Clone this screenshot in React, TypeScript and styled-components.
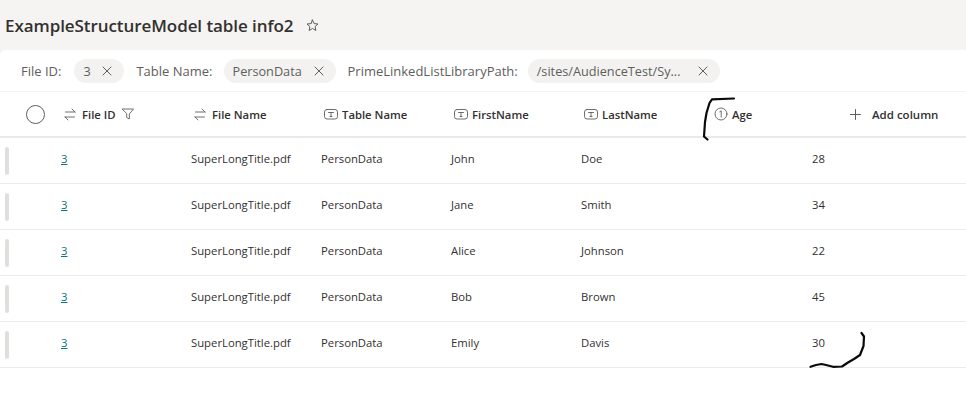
import React from 'react';
import styled, { createGlobalStyle } from 'styled-components';

const GlobalStyle = createGlobalStyle`
  html, body {
    margin: 0;
    background: #ffffff;
  }

  body {
    color: #323130;
    font-family: 'Open Sans', 'Liberation Sans', sans-serif;
    font-size: 12px;
  }
`;

const Page = styled.div`
  background: #f5f4f2;
  height: 407px;
  overflow: hidden;
  position: relative;
  width: 966px;
`;

const TitleBar = styled.div`
  align-items: center;
  display: flex;
  gap: 12px;
  height: 50px;
  padding: 0 5px;
  box-sizing: border-box;
`;

const Title = styled.h1`
  color: #323130;
  font-size: 17px;
  font-weight: 600;
  letter-spacing: -0.07px;
  margin: 0;
  white-space: nowrap;
`;

const Panel = styled.div`
  background: #ffffff;
  border-radius: 6px 0 0 0;
  height: 357px;
`;

const FilterRow = styled.div`
  align-items: center;
  border-bottom: 1px solid #f6f5f4;
  box-sizing: border-box;
  display: flex;
  height: 42px;
  padding: 1px 0 0 21px;
`;

const FilterLabel = styled.span<{ $gap?: number }>`
  color: #605e5c;
  font-size: 13px;
  margin-right: ${({ $gap }) => $gap ?? 11}px;
  white-space: nowrap;
`;

const Chip = styled.div<{ $width: number }>`
  align-items: center;
  background: #f3f2f1;
  border-radius: 12px;
  box-sizing: border-box;
  color: #605e5c;
  display: flex;
  font-size: 12.7px;
  height: 24px;
  justify-content: space-between;
  margin-right: 12px;
  padding: 0 12px 0 9px;
  width: ${({ $width }) => $width}px;
  white-space: nowrap;
`;

const Row = styled.div`
  display: grid;
  grid-template-columns: 61px 130px 130px 130px 130px 130px 130px 1fr;
`;

const HeaderRow = styled(Row)`
  border-bottom: 2px solid #ebeaea;
  box-sizing: border-box;
  height: 46px;
`;

const BodyRow = styled(Row)`
  border-bottom: 1px solid #edebe9;
  box-sizing: border-box;
  height: 46px;
`;

const SelectCell = styled.div`
  align-items: center;
  display: flex;
  padding-left: 26px;
`;

const Circle = styled.div`
  border: 1.5px solid #605e5c;
  border-radius: 50%;
  box-sizing: border-box;
  height: 19px;
  width: 19px;
`;

const HeaderCell = styled.div<{ $gap?: number }>`
  align-items: center;
  color: #323130;
  display: flex;
  font-size: 11.3px;
  font-weight: 600;
  gap: ${({ $gap }) => $gap ?? 4}px;
  padding-left: 3px;
  white-space: nowrap;
`;

const AddCell = styled(HeaderCell)`
  font-size: 11.5px;
  gap: 11px;
  padding-left: 9px;
`;

const GripCell = styled.div`
  align-items: center;
  display: flex;
  padding-left: 5px;
`;

const Grip = styled.div`
  background: #e1dfdd;
  border-radius: 2px;
  height: 28px;
  width: 4px;
`;

const Cell = styled.div`
  align-items: center;
  color: #323130;
  display: flex;
  font-size: 11.3px;
  padding-bottom: 5px;
  white-space: nowrap;
`;

const NumberCell = styled(Cell)`
  justify-content: flex-end;
  padding-right: 16px;
`;

const FileLink = styled.a`
  color: #03787c;
  text-decoration: underline;
`;

const Ink = styled.svg`
  fill: none;
  height: 407px;
  left: 0;
  pointer-events: none;
  position: absolute;
  stroke: #0a0a0a;
  stroke-linecap: round;
  stroke-linejoin: round;
  stroke-width: 2.2;
  top: 0;
  width: 966px;
`;

const Glyph = styled.svg`
  flex: none;
  fill: none;
  stroke: #605e5c;
  stroke-linecap: round;
  stroke-linejoin: round;
`;

const StarIcon = () => (
  <Glyph width="13" height="13" viewBox="0 0 13 13" strokeWidth="1">
    <path d="M6.5 1l1.6 3.6 3.9.4-2.9 2.6.8 3.9-3.4-2-3.4 2 .8-3.9L1 5l3.9-.4z" />
  </Glyph>
);

const CloseIcon = () => (
  <Glyph width="10" height="10" viewBox="0 0 10 10" strokeWidth="1">
    <path d="M1 1l8 8M9 1l-8 8" />
  </Glyph>
);

const SwapIcon = () => (
  <Glyph width="12" height="13" viewBox="0 0 12 13" strokeWidth="0.9">
    <path d="M1.5 4h9.5M8 1l3 3M10.5 9H1M4 12L1 9" />
  </Glyph>
);

const FilterIcon = () => (
  <Glyph width="12" height="12" viewBox="0 0 12 12" strokeWidth="0.9">
    <path d="M.5 1h11L7.3 6v5L4.7 9.5V6z" />
  </Glyph>
);

const TextIcon = () => (
  <Glyph width="14" height="11" viewBox="0 0 14 11" strokeWidth="0.9">
    <rect x="0.5" y="0.5" width="13" height="9.5" rx="2.5" />
    <path d="M4.5 3.5h5M7 3.5v4M6 7.5h2" />
  </Glyph>
);

const NumberIcon = () => (
  <Glyph width="14" height="14" viewBox="0 0 14 14" strokeWidth="0.9">
    <circle cx="7" cy="7" r="6" />
    <path d="M5.7 4.8L7.2 3.8v6.4" />
  </Glyph>
);

const PlusIcon = () => (
  <Glyph width="11" height="11" viewBox="0 0 11 11" strokeWidth="1">
    <path d="M5.5 .5v10M.5 5.5h10" />
  </Glyph>
);

const people = [
  { first: 'John', last: 'Doe', age: 28 },
  { first: 'Jane', last: 'Smith', age: 34 },
  { first: 'Alice', last: 'Johnson', age: 22 },
  { first: 'Bob', last: 'Brown', age: 45 },
  { first: 'Emily', last: 'Davis', age: 30 },
];

const App: React.FC = () => (
  <Page>
    <GlobalStyle />
    <TitleBar>
      <Title>ExampleStructureModel table info2</Title>
      <StarIcon />
    </TitleBar>
    <Panel>
      <FilterRow>
        <FilterLabel $gap={13}>File ID:</FilterLabel>
        <Chip $width={50}>
          3
          <CloseIcon />
        </Chip>
        <FilterLabel>Table Name:</FilterLabel>
        <Chip $width={112}>
          PersonData
          <CloseIcon />
        </Chip>
        <FilterLabel $gap={10}>PrimeLinkedListLibraryPath:</FilterLabel>
        <Chip $width={192}>
          /sites/AudienceTest/Sy...
          <CloseIcon />
        </Chip>
      </FilterRow>
      <HeaderRow>
        <SelectCell>
          <Circle />
        </SelectCell>
        <HeaderCell $gap={6}>
          <SwapIcon />
          File ID
          <FilterIcon />
        </HeaderCell>
        <HeaderCell $gap={6}>
          <SwapIcon />
          File Name
        </HeaderCell>
        <HeaderCell>
          <TextIcon />
          Table Name
        </HeaderCell>
        <HeaderCell>
          <TextIcon />
          FirstName
        </HeaderCell>
        <HeaderCell>
          <TextIcon />
          LastName
        </HeaderCell>
        <HeaderCell>
          <NumberIcon />
          Age
        </HeaderCell>
        <AddCell>
          <PlusIcon />
          Add column
        </AddCell>
      </HeaderRow>
      {people.map((person) => (
        <BodyRow key={person.first}>
          <GripCell>
            <Grip />
          </GripCell>
          <Cell>
            <FileLink>3</FileLink>
          </Cell>
          <Cell>SuperLongTitle.pdf</Cell>
          <Cell>PersonData</Cell>
          <Cell>{person.first}</Cell>
          <Cell>{person.last}</Cell>
          <NumberCell>{person.age}</NumberCell>
        </BodyRow>
      ))}
    </Panel>
    <Ink viewBox="0 0 966 407">
      <path d="M734 98.5L712 99.3 709.5 103 706.5 113 705 122 704 136.5 707.5 139.5" />
      <path d="M861.5 333L864 336.5 863.5 346 860 355 854 359 848 362.5 842 366.5 833 366.8 826 365 821.5 364 816 365 810.5 366.8" />
    </Ink>
  </Page>
);

export default App;
